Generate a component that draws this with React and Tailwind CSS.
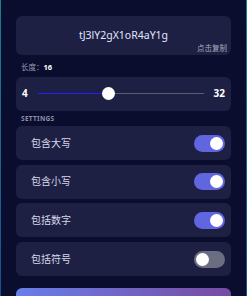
import { useState } from 'react';

const OPTIONS = [
  { label: '包含大写', on: true },
  { label: '包含小写', on: true },
  { label: '包括数字', on: true },
  { label: '包括符号', on: false },
];

function Toggle({ on }) {
  return (
    <div
      className={`w-[31px] h-[17px] rounded-full flex items-center px-[2px] ${
        on ? 'bg-[#5f66e0] justify-end' : 'bg-[#6b6d80] justify-start'
      }`}
    >
      <div className="w-[13px] h-[13px] rounded-full bg-white" />
    </div>
  );
}

export default function App() {
  const [length] = useState(16);
  const percent = ((length - 4) / (32 - 4)) * 100;

  return (
    <div className="w-[247px] h-[296px] overflow-hidden bg-gradient-to-b from-[#1d7d8c] to-[#1c4f8e] px-px">
      <div
        className="h-full bg-[#0b0d2f] px-[15px] pt-4 flex flex-col [&>*]:shrink-0"
        style={{ fontFamily: '"Noto Sans", "Noto Sans CJK SC", sans-serif' }}
      >
        {/* Generated password */}
        <div className="h-[39px] rounded-md bg-[#1e2043] relative flex items-center justify-center">
          <span className="text-[10.5px] text-[#e2e5ff]">tJ3lY2gX1oR4aY1g</span>
          <span className="absolute right-[4px] bottom-[3px] text-[7.5px] leading-none text-[#a9abc0]">点击复制</span>
        </div>

        {/* Length */}
        <div className="mt-[9px] pl-[5px] text-[7.5px] leading-none flex items-center">
          <span className="text-[#9a9cb4]">长度：</span>
          <span className="text-white font-bold">{length}</span>
        </div>
        <div className="mt-[5px] h-[34px] rounded-md bg-[#1e2043] flex items-center px-[6px] gap-[10px]">
          <span className="text-[10px] font-bold text-white">4</span>
          <div className="flex-1 relative h-[1.5px] bg-[#5a5d72] rounded-full">
            <div className="h-full bg-[#1a22ff] rounded-full" style={{ width: `${percent}%` }} />
            <div
              className="absolute top-1/2 w-[13px] h-[13px] -mt-[6.5px] -ml-[6.5px] rounded-full bg-white"
              style={{ left: `${percent}%` }}
            />
          </div>
          <span className="text-[10px] font-bold text-white">32</span>
        </div>

        {/* Settings */}
        <div className="mt-[5px] pl-[5px] text-[6.5px] leading-none font-bold tracking-[0.3px] text-[#8e90a8]">SETTINGS</div>
        <div className="mt-[4px] flex flex-col gap-[4.7px]">
          {OPTIONS.map((opt) => (
            <div
              key={opt.label}
              className="h-[34px] rounded-md bg-[#1e2043] flex items-center justify-between pl-[15px] pr-[6px]"
            >
              <span className="text-[10px] text-[#d6d8ec]">{opt.label}</span>
              <Toggle on={opt.on} />
            </div>
          ))}
        </div>

        <div className="mt-[12px] h-[34px] rounded-md bg-gradient-to-r from-[#667eea] to-[#764ba2]" />
      </div>
    </div>
  );
}
